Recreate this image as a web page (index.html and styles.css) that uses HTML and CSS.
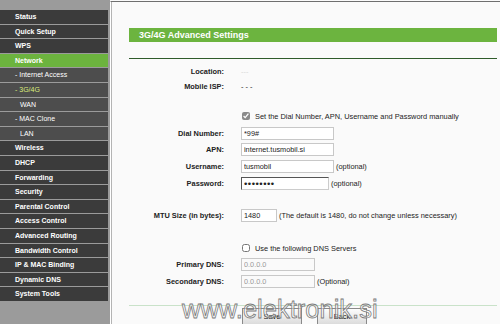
FILE: index.html
```html
<!DOCTYPE html>
<html>
<head>
<meta name="viewport" content="width=device-width, initial-scale=1">
<link rel="stylesheet" href="styles.css">
</head>
<body>
<div class="page">
  <nav class="menu">
    <a class="item">Status</a>
    <a class="item">Quick Setup</a>
    <a class="item">WPS</a>
    <a class="item active">Network</a>
    <a class="item sub">- Internet Access</a>
    <a class="item sub current">- 3G/4G</a>
    <a class="item sub deep">WAN</a>
    <a class="item sub">- MAC Clone</a>
    <a class="item sub deep">LAN</a>
    <a class="item">Wireless</a>
    <a class="item">DHCP</a>
    <a class="item">Forwarding</a>
    <a class="item">Security</a>
    <a class="item">Parental Control</a>
    <a class="item">Access Control</a>
    <a class="item">Advanced Routing</a>
    <a class="item">Bandwidth Control</a>
    <a class="item">IP &amp; MAC Binding</a>
    <a class="item">Dynamic DNS</a>
    <a class="item">System Tools</a>
  </nav>

  <main class="content">
    <div class="title">3G/4G Advanced Settings</div>
    <div class="rule"></div>

    <div class="row short first"><span class="label">Location:</span><span class="faint">---</span></div>
    <div class="row short"><span class="label">Mobile ISP:</span><span>- - -</span></div>

    <div class="row gap-a"><span class="label"></span><input type="checkbox" class="check" checked><span class="check-text">Set the Dial Number, APN, Username and Password manually</span></div>
    <div class="row"><span class="label">Dial Number:</span><input class="field" type="text" value="*99#"></div>
    <div class="row"><span class="label">APN:</span><input class="field" type="text" value="internet.tusmobil.si"></div>
    <div class="row"><span class="label">Username:</span><input class="field" type="text" value="tusmobil"><span class="note">(optional)</span></div>
    <div class="row"><span class="label">Password:</span><input class="field pass" type="password" value="tusmobil"><span class="note">(optional)</span></div>

    <div class="row gap-b"><span class="label">MTU Size (in bytes):</span><input class="field mtu" type="text" value="1480"><span class="note">(The default is 1480, do not change unless necessary)</span></div>

    <div class="row gap-c"><span class="label"></span><input type="checkbox" class="check"><span class="check-text">Use the following DNS Servers</span></div>
    <div class="row"><span class="label">Primary DNS:</span><input class="field dns" type="text" value="0.0.0.0" disabled></div>
    <div class="row"><span class="label">Secondary DNS:</span><input class="field dns" type="text" value="0.0.0.0" disabled><span class="note">(Optional)</span></div>

    <div class="rule light"></div>
    <div class="buttons">
      <button class="btn save">Save</button>
      <button class="btn back">Back</button>
    </div>

    <div class="watermark">www.elektronik.si</div>
  </main>
</div>
</body>
</html>
```

FILE: styles.css
```css
* {
  box-sizing: border-box;
}

body {
  margin: 0;
  font-family: "Liberation Sans", Arial, sans-serif;
  background: #fafafa;
  overflow: hidden;
}

.page {
  display: flex;
  width: 500px;
  height: 324px;
}

/* left menu */
.menu {
  width: 110px;
  flex: none;
  background: #9b9b9b;
  padding-top: 10px;
  display: flex;
  flex-direction: column;
  gap: 1px;
}

.item {
  display: block;
  width: 108px;
  height: 13.6px;
  line-height: 13.6px;
  padding-left: 15px;
  background: #3b3b3b;
  color: #fff;
  font-size: 7px;
  font-weight: bold;
  white-space: nowrap;
}

.item.active {
  background: #6cb33e;
}

.item.sub {
  background: #4d4d4d;
  font-weight: normal;
}

.item.deep {
  padding-left: 20px;
}

.item.current {
  color: #d9ec7a;
}

/* main area */
.content {
  position: relative;
  flex: 1;
  margin-top: 1px;
  border-top: 1px solid #6f6f6f;
  border-left: 1px solid #fff;
  box-shadow: inset 1px 0 #b4b4b4;
  padding: 26px 3px 0 18px;
  font-size: 7.4px;
  color: #222;
}

.title {
  height: 14px;
  line-height: 14px;
  background: #6cb43f;
  color: #fff;
  font-size: 9px;
  font-weight: bold;
  padding-left: 10px;
}

.rule {
  height: 1px;
  margin-top: 16px;
  background: #2f5b2a;
}

.rule.light {
  margin-top: 15.5px;
  background: #c9e2c9;
}

.row {
  display: flex;
  align-items: center;
  height: 16.7px;
}

.row.short {
  height: 15px;
}

.row.first {
  margin-top: 4.5px;
}

.gap-a {
  margin-top: 14.5px;
}

.gap-b {
  margin-top: 15.7px;
}

.gap-c {
  margin-top: 16px;
}

.label {
  width: 95px;
  flex: none;
  text-align: right;
  font-weight: bold;
  margin-right: 17px;
}

.faint {
  color: #d8d8d8;
}

.check {
  width: 8px;
  height: 8px;
  margin: 0 5px 0 1px;
  accent-color: #8a8a8a;
}

.field {
  width: 93px;
  height: 13px;
  padding: 0 2px;
  border: 1px solid #c8c8c8;
  background: #fff;
  font-family: "Liberation Sans", Arial, sans-serif;
  font-size: 7.3px;
  color: #222;
  outline: none;
}

.field.pass {
  width: 88px;
  font-size: 9.5px;
  letter-spacing: 0.5px;
  border-color: #555 #ccc #ccc #555;
}

.field.mtu {
  width: 36px;
}

.field.dns {
  width: 74px;
  color: #999;
  background: #fafafa;
}

.note {
  margin-left: 2px;
}

.buttons {
  display: flex;
  padding-left: 113px;
  margin-top: 2px;
  gap: 15px;
}

.btn {
  height: 17px;
  border: 1px solid #8a8a8a;
  background: linear-gradient(#fdfdfd, #dcdcdc);
  font-family: "Liberation Sans", Arial, sans-serif;
  font-size: 7.5px;
  color: #111;
  padding: 0;
  align-self: flex-start;
}

.btn.save {
  width: 60px;
}

.btn.back {
  width: 50px;
}

.watermark {
  position: absolute;
  left: 71px;
  top: 295px;
  font-size: 25.5px;
  line-height: 25px;
  color: rgba(255, 255, 255, 0.55);
  -webkit-text-stroke: 0.8px #7a7a7a;
  white-space: nowrap;
}
```
